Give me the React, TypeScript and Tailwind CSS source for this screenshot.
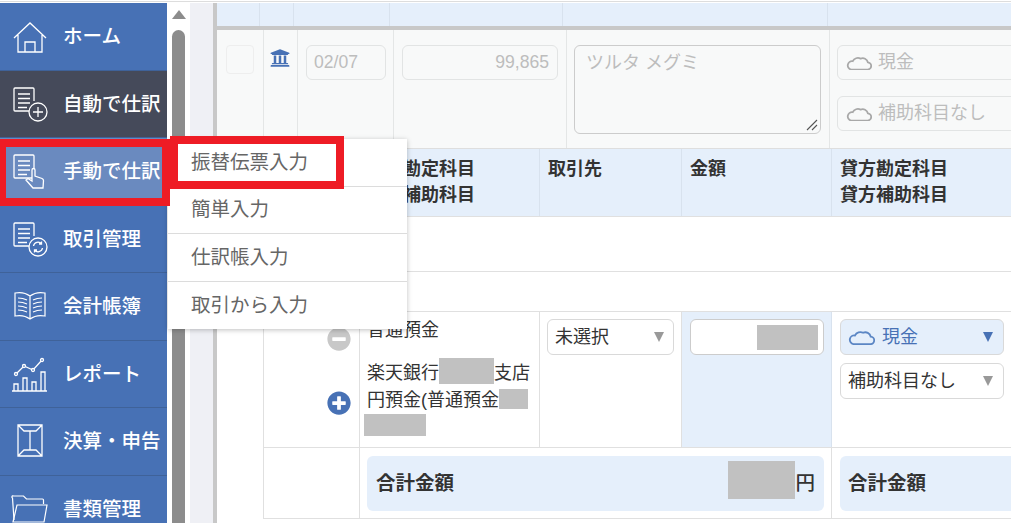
import React from 'react';
import { FaMinusCircle, FaPlusCircle, FaUniversity } from 'react-icons/fa';

const font = { fontFamily: '"Liberation Sans", "Noto Sans CJK JP", sans-serif' };

function HomeIcon() {
  return (
    <svg className="mt-[3px]" width="34" height="32" viewBox="0 0 34 32" fill="none" stroke="white" strokeWidth="1.3">
      <path d="M1 16 17 1l16 15M5 13v17h24V13M12 30V20h10v10" />
    </svg>
  );
}

function DocIcon({ children }: { children?: React.ReactNode }) {
  return (
    <svg width="36" height="36" viewBox="0 0 36 36" fill="none" stroke="white" strokeWidth="1.3">
      <path d="M20 25H3a1 1 0 0 1-1-1V3a1 1 0 0 1 1-1h18a1 1 0 0 1 1 1v12" />
      <path d="M6 8h12M6 12.500h12M6 17h12M6 21.500h9" />
      {children}
    </svg>
  );
}

function BookIcon() {
  return (
    <svg width="34" height="30" viewBox="0 0 34 30" fill="none" stroke="white" strokeWidth="1.2">
      <path d="M17 5C13 2 7 1 2 2v23c5-1 11 0 15 3 4-3 10-4 15-3V2c-5-1-11 0-15 3zM17 5v23" />
      <path d="M5 7c3 0 6 .5 9 2M5 11c3 0 6 .5 9 2M5 15c3 0 6 .5 9 2M5 19c3 0 6 .5 9 2M29 7c-3 0-6 .5-9 2M29 11c-3 0-6 .5-9 2M29 15c-3 0-6 .5-9 2M29 19c-3 0-6 .5-9 2" />
    </svg>
  );
}

function ReportIcon() {
  return (
    <svg width="38" height="38" viewBox="0 0 38 38" fill="none" stroke="white" strokeWidth="1.3">
      <path d="M1 36h35M3 36v-7h4v7M12 36V23h4v13M21 36V27h4v9M30 36V17h4v19" />
      <path d="M5 19l8-8 9 4 9-10" />
      <circle cx="5" cy="19" r="1.500" fill="#4771b5" />
      <circle cx="13" cy="11" r="1.500" fill="#4771b5" />
      <circle cx="22" cy="15" r="1.500" fill="#4771b5" />
      <circle cx="31" cy="5" r="1.500" fill="#4771b5" />
    </svg>
  );
}

function EnvelopeIcon() {
  return (
    <svg width="28" height="36" viewBox="0 0 28 36" fill="none" stroke="white" strokeWidth="1.3">
      <path d="M2 2h24v31H2zM2 2l6 6h12l6-6M14 8v19M2 33l6-6h12l6 6" />
    </svg>
  );
}

function FolderIcon() {
  return (
    <svg width="38" height="30" viewBox="0 0 38 30" fill="none" stroke="white" strokeWidth="1.2">
      <path d="M3 26 1.500 4a1 1 0 0 1 1-2h10l3 3h16a1 1 0 0 1 1 1v4" />
      <path d="M6 11h30l-3 17H2z" />
    </svg>
  );
}

function CloudIcon({ color, w = 26 }: { color: string; w?: number }) {
  return (
    <svg width={w} height={(w * 15) / 25} viewBox="0 0 25 15" fill="none" stroke={color} strokeWidth="1.700">
      <path d="M5 14h15.500a3.500 3.500 0 0 0 .5-7 5 5 0 0 0-7-3.500A5.500 5.500 0 0 0 6.500 6 4 4 0 0 0 5 14z" />
    </svg>
  );
}

function Caret({ color = '#999999' }: { color?: string }) {
  return <span className="h-0 w-0 border-x-[5.5px] border-t-[10px] border-x-transparent" style={{ borderTopColor: color }} />;
}

function NavItem({ icon, label, className = '' }: { icon: React.ReactNode; label: string; className?: string }) {
  return (
    <div className={`flex h-[67.5px] shrink-0 items-center border-b border-[#3f6299] ${className}`}>
      <div className="flex w-[60px] shrink-0 justify-center">{icon}</div>
      <span className="ml-[3px] whitespace-nowrap pt-[1px] text-[19.5px] font-medium text-white">{label}</span>
    </div>
  );
}

function GrayBlock({ className }: { className: string }) {
  return <span className={`inline-block bg-[#c1c1c1] ${className}`} />;
}

function Sidebar() {
  return (
    <div className="flex w-[167px] shrink-0 flex-col bg-[#4771b5]">
      <NavItem label="ホーム" icon={<HomeIcon />} />
      <NavItem
        label="自動で仕訳"
        className="bg-[#454a5a]"
        icon={
          <DocIcon>
            <circle cx="26" cy="26" r="9" fill="#454a5a" />
            <path d="M26 21v10M21 26h10" />
          </DocIcon>
        }
      />
      <NavItem
        label="手動で仕訳"
        className="bg-[#6a8abf]"
        icon={
          <DocIcon>
            <path d="M21 35l-7-8 2-1.500 4 2.500V17a1.500 1.500 0 0 1 3 0v6l7 2.500c1 .5 1.500 1 1.500 2l-.5 7.500z" fill="#6a8abf" />
          </DocIcon>
        }
      />
      <NavItem
        label="取引管理"
        icon={
          <DocIcon>
            <circle cx="26" cy="26" r="9" fill="#4771b5" />
            <path d="M21.500 25a4.500 4.500 0 0 1 8-2M30.500 27a4.500 4.500 0 0 1-8 2M29.500 20.500V23H27M22.500 31.500V29H25" />
          </DocIcon>
        }
      />
      <NavItem label="会計帳簿" icon={<BookIcon />} />
      <NavItem label="レポート" icon={<ReportIcon />} />
      <NavItem label="決算・申告" icon={<EnvelopeIcon />} />
      <NavItem label="書類管理" icon={<FolderIcon />} />
    </div>
  );
}

function Scrollbar() {
  return (
    <div className="flex w-[23px] shrink-0 flex-col items-center bg-white">
      <span className="mt-[7px] h-0 w-0 border-x-[7px] border-b-[9px] border-x-transparent border-b-[#8c8c8c]" />
      <div className="mt-[11px] h-[600px] w-[13px] rounded-t-full bg-[#8c8c8c]" />
    </div>
  );
}

function DisabledBox({ className, children }: { className: string; children?: React.ReactNode }) {
  return (
    <div className={`flex items-center rounded-[6px] border border-[#e2e4e4] text-[#bdbdbd] ${className}`}>{children}</div>
  );
}

function Selected({ className, children }: { className?: string; children: React.ReactNode }) {
  return (
    <div className={`flex h-[36px] items-center justify-between rounded-[6px] border border-[#d9d9d9] pl-[7px] ${className ?? ''}`}>
      {children}
    </div>
  );
}

function Ledger() {
  return (
    <div className="flex min-w-0 flex-1 flex-col overflow-hidden border-l-[4px] border-[#c8c8c8] text-[18px] text-[#333333]">
      {/* previous row header, scrolled off at the top */}
      <div className="-ml-[3px] grid h-[23px] shrink-0 grid-cols-[46px_34px_96px_173px_265px_1fr] overflow-hidden bg-[#e5effb]">
        <div className="border-r border-[#d8e2ee]" />
        <div className="border-r border-[#d8e2ee]" />
        <div className="border-r border-[#d8e2ee]" />
        <div className="border-r border-[#d8e2ee]" />
        <div className="border-r border-[#d8e2ee]" />
        <div className="-mt-[21px] pl-[2px] font-bold leading-[25px]">補助科目</div>
      </div>
      <div className="-ml-[4px] h-[4px] shrink-0 bg-[#c8c8c8]" />

      {/* greyed out statement row */}
      <div className="grid h-[119px] shrink-0 grid-cols-[47px_34px_96px_173px_263px_1fr] border-b border-[#dedede] bg-[#f8f9f9]">
        <div className="border-r border-[#e4e6e6] pl-[9px] pt-[15px]">
          <div className="h-[29px] w-[28px] rounded-[4px] border border-[#eeeeee]" />
        </div>
        <div className="border-r border-[#e4e6e6] pl-[6px] pt-[18px]">
          <FaUniversity className="h-[20px] w-[20px] text-[#4771b5]" />
        </div>
        <div className="border-r border-[#e4e6e6] pl-[8px] pt-[15px]">
          <DisabledBox className="h-[35px] w-[80px] pl-[7px] text-[17.6px]">02/07</DisabledBox>
        </div>
        <div className="border-r border-[#e4e6e6] pl-[8px] pt-[15px]">
          <DisabledBox className="h-[35px] w-[156px] justify-end pr-[8px] text-[17.6px]">99,865</DisabledBox>
        </div>
        <div className="border-r border-[#e4e6e6] pl-[7px] pt-[15px]">
          <div className="relative h-[89px] w-[247px] rounded-[6px] border border-[#cccccc] pl-[11px] pt-[4px] text-[#bdbdbd]">
            ツルタ メグミ
            <svg className="absolute bottom-[1px] right-[1px]" width="14" height="14" viewBox="0 0 14 14" stroke="#555555" strokeWidth="1.100">
              <path d="M2 12 12 2M7 12l5-5" />
            </svg>
          </div>
        </div>
        <div className="flex flex-col gap-[16px] pl-[7px] pt-[15px]">
          <DisabledBox className="h-[35px] w-[200px] gap-[6px] pl-[8px]">
            <CloudIcon color="#a8a8a8" />
            現金
          </DisabledBox>
          <DisabledBox className="h-[35px] w-[200px] gap-[6px] pl-[8px]">
            <CloudIcon color="#a8a8a8" />
            補助科目なし
          </DisabledBox>
        </div>
      </div>

      <div className="grid min-h-0 flex-1 grid-cols-[46px_97px_180px_142px_150px_1fr] grid-rows-[67px_56px_40px_135px_72px_1fr]">
        {/* column headers */}
        <div className="col-span-2 bg-[#e5effb]" />
        <div className="border-r border-[#d8e2ee] bg-[#e5effb] pl-[7px] pt-[8px] font-bold leading-[25.500px]">
          借方勘定科目
          <br />
          借方補助科目
        </div>
        <div className="border-r border-[#d8e2ee] bg-[#e5effb] pl-[8px] pt-[8px] font-bold leading-[25.500px]">取引先</div>
        <div className="border-r border-[#d8e2ee] bg-[#e5effb] pl-[8px] pt-[8px] font-bold leading-[25.500px]">金額</div>
        <div className="bg-[#e5effb] pl-[8px] pt-[8px] font-bold leading-[25.500px]">
          貸方勘定科目
          <br />
          貸方補助科目
        </div>

        {/* blank rows */}
        <div className="col-span-6 border-y border-[#e0e0e0]" />
        <div className="col-span-6 border-b border-[#e0e0e0]" />

        {/* journal line */}
        <div className="row-span-3" />
        <div className="flex flex-col items-end gap-[40px] border-x border-[#e0e0e0] pr-[8px] pt-[15px]">
          <FaMinusCircle className="h-[24px] w-[24px] text-[#c8c8c8]" />
          <FaPlusCircle className="h-[24px] w-[24px] text-[#4771b5]" />
        </div>
        <div className="border-r border-[#e0e0e0] pl-[7px] leading-[27px]">
          <div className="mt-[5px]">普通預金</div>
          <div className="mt-[16px] flex items-center">
            楽天銀行
            <GrayBlock className="-mt-[6px] h-[26px] w-[55px]" />
            支店
          </div>
          <div className="flex items-center whitespace-nowrap">
            円預金(普通預金
            <GrayBlock className="-mt-[4px] h-[20px] w-[29px]" />
          </div>
          <GrayBlock className="-ml-[3px] h-[22px] w-[62px]" />
        </div>
        <div className="border-r border-[#e0e0e0] pl-[7px] pr-[7px] pt-[7px]">
          <Selected className="pr-[9px]">
            未選択
            <Caret />
          </Selected>
        </div>
        <div className="border-r border-[#d8e2ee] bg-[#e5effb] pl-[8px] pt-[7px]">
          <div className="flex h-[36px] w-[134px] items-center justify-end rounded-[6px] border border-[#cccccc] bg-white pr-[5px]">
            <GrayBlock className="h-[25px] w-[61px]" />
          </div>
        </div>
        <div className="flex flex-col gap-[8px] pl-[8px] pr-[7px] pt-[7px]">
          <Selected className="bg-[#e5effb] pr-[10px] text-[#4771b5]">
            <span className="flex items-center gap-[7px]">
              <CloudIcon color="#5b86c4" w={27} />
              現金
            </span>
            <Caret color="#4771b5" />
          </Selected>
          <Selected className="pr-[10px]">
            補助科目なし
            <Caret />
          </Selected>
        </div>

        {/* totals */}
        <div className="border-x border-y border-[#e0e0e0]" />
        <div className="col-span-3 border-y border-r border-[#e0e0e0] pb-[7px] pl-[7px] pr-[7px] pt-[8px]">
          <div className="flex h-full items-center justify-between rounded-[6px] bg-[#e5effb] pl-[9px] pr-[9px] text-[19.5px] font-bold">
            合計金額
            <span className="flex items-center font-medium">
              <GrayBlock className="mb-[7px] h-[38px] w-[67px]" />
              円
            </span>
          </div>
        </div>
        <div className="border-y border-[#e0e0e0] pb-[7px] pl-[8px] pt-[8px]">
          <div className="flex h-full items-center rounded-l-[6px] bg-[#e5effb] pl-[8px] text-[19.5px] font-bold">合計金額</div>
        </div>

        <div />
        <div className="col-span-5 border-l border-[#e0e0e0]" />
      </div>
    </div>
  );
}

function FlyoutMenu() {
  const items = ['振替伝票入力', '簡単入力', '仕訳帳入力', '取引から入力'];
  return (
    <div className="absolute left-[168px] top-[139px] w-[239px] bg-white text-[19.5px] text-[#666666] shadow-[0_1px_5px_rgba(0,0,0,0.25)]">
      {items.map((item, i) => (
        <div key={item} className={`flex h-[47.500px] items-center pl-[23px] ${i < 3 ? 'border-b border-[#dcdcdc]' : ''}`}>
          {item}
        </div>
      ))}
    </div>
  );
}

export default function App() {
  return (
    <div className="relative h-[523px] w-[1011px] overflow-hidden bg-white" style={font}>
      <div className="h-[3px] border-t border-t-transparent">
        <div className="h-[1px] bg-[#dddddd]" />
      </div>
      <div className="flex h-[520px]">
        <Sidebar />
        <Scrollbar />
        <div className="w-[23px] shrink-0 bg-[#eff0f5]" />
        <Ledger />
      </div>
      <FlyoutMenu />
      {/* red callouts */}
      <div className="absolute left-[-2px] top-[139px] h-[67px] w-[172px] border-[8px] border-[#ee1c25]" />
      <div className="absolute left-[170px] top-[136px] h-[53px] w-[174px] border-[8px] border-[#ee1c25]" />
    </div>
  );
}
